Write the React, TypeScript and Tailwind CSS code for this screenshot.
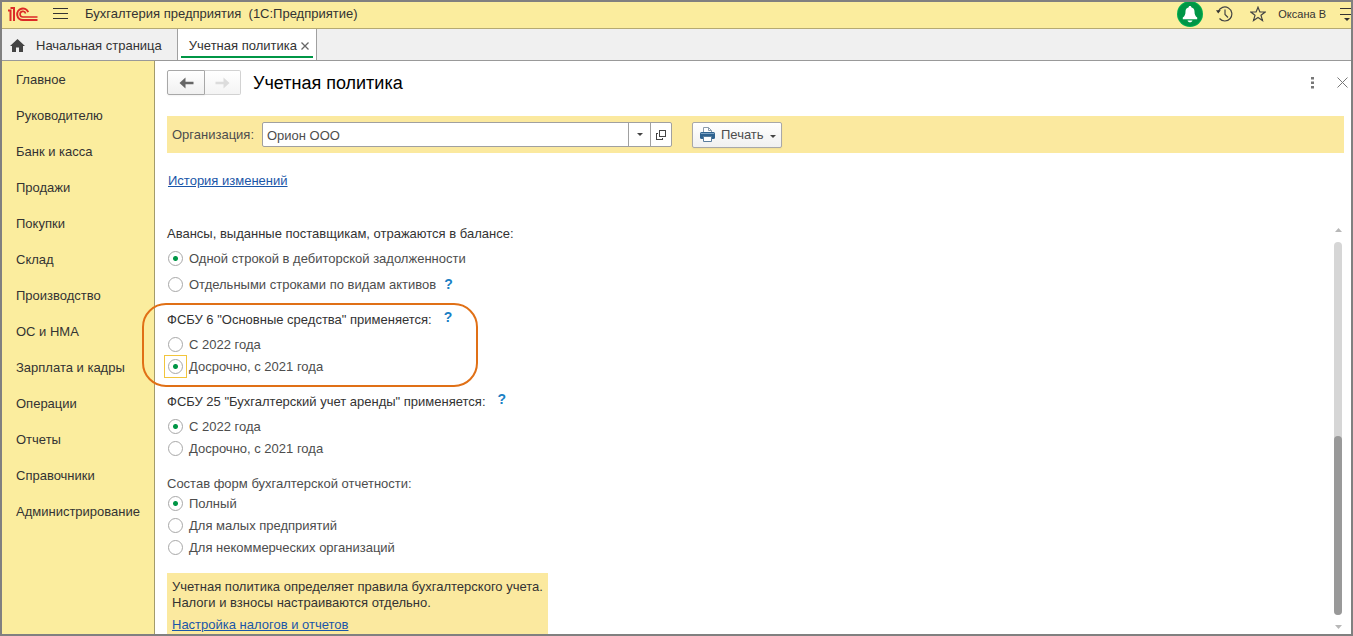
import { useState } from "react";
import type { ReactNode } from "react";

const SECTIONS = [
  "Главное",
  "Руководителю",
  "Банк и касса",
  "Продажи",
  "Покупки",
  "Склад",
  "Производство",
  "ОС и НМА",
  "Зарплата и кадры",
  "Операции",
  "Отчеты",
  "Справочники",
  "Администрирование",
];

function Logo() {
  return (
    <svg width="30" height="15" viewBox="0 0 30 15" fill="none" stroke="#dc2a27">
      <path d="M0 3.500h2.500V14" strokeWidth="2" />
      <path d="M2.500 1h3.500V14" strokeWidth="2" />
      <path d="M20.200 5.200A5.700 5.700 0 1 0 15 13H29.500" strokeWidth="2" />
      <path d="M17.600 6.500A2.800 2.800 0 1 0 15 10H29.500" strokeWidth="1.700" />
    </svg>
  );
}

function TopBar() {
  return (
    <header className="flex h-[27px] shrink-0 items-center border-b border-[#b5aa72] bg-[#fbed9e] pb-0.5 pl-1.5 text-[#333]">
      <Logo />
      <button aria-label="Меню" className="ml-[15px]">
        <svg width="15" height="12" viewBox="0 0 15 12" stroke="#333" shapeRendering="crispEdges">
          <path d="M0 .5h15M0 5.500h15M0 10.500h15" />
        </svg>
      </button>
      <h1 className="ml-[17px] whitespace-pre">Бухгалтерия предприятия  (1С:Предприятие)</h1>
      <div className="ml-auto flex items-center">
        <button aria-label="Уведомления">
          <svg width="26" height="26" viewBox="0 0 26 26">
            <circle cx="13" cy="13" r="13" fill="#00b050" />
            <circle cx="13" cy="13" r="12" fill="#009646" />
            <path
              d="M13 5c-.9 0-1.300.6-1.300 1.200-2.200.6-3.200 2.200-3.200 4.400 0 3-.8 4.600-2.700 6v1.700h14.400v-1.700c-1.900-1.400-2.700-3-2.700-6 0-2.200-1-3.800-3.200-4.400C14.300 5.600 13.900 5 13 5zM10.500 19.400h5c-.3 1.200-1.300 1.800-2.500 1.800s-2.200-.6-2.500-1.800z"
              fill="#fff"
            />
          </svg>
        </button>
        <button aria-label="История" className="ml-[13px]">
          <svg width="17" height="16" viewBox="0 0 17 16" fill="none" stroke="#444" strokeWidth="1.200">
            <path d="M2.300 5.500A7 7 0 1 1 3.500 12.500" />
            <path d="M9 3.500v5l3 3" />
            <path d="M0 4.200h4.800L2.200 7.400z" fill="#333" stroke="none" />
          </svg>
        </button>
        <button aria-label="Избранное" className="ml-[17px]">
          <svg width="16" height="16" viewBox="0 0 16 16" fill="none" stroke="#444" strokeWidth="1.200">
            <path d="M8 1.200 9.900 6h5.300l-4.200 3.300 1.500 5.200L8 11.500l-4.500 3L5 9.300.8 6h5.300z" />
          </svg>
        </button>
        <span className="ml-3 text-[11px]">Оксана В</span>
        <button aria-label="Настройки" className="ml-3.5">
          <svg width="11" height="13" viewBox="0 0 11 13">
            <path d="M0 .5h11M0 6.500h11" stroke="#333" shapeRendering="crispEdges" />
            <path d="M4 10h6l-3 3z" fill="#333" />
          </svg>
        </button>
      </div>
    </header>
  );
}

function Tabs() {
  return (
    <nav className="flex h-8 shrink-0 border-b border-[#999] bg-[#f0f0f0] text-[#333]">
      <button className="flex items-center border-r border-[#a0a0a0] pt-0.5 pr-[15px] pl-2">
        <svg width="15" height="13" viewBox="0 0 15 13" fill="#444">
          <path d="M7.500 0 15 7h-2v6H9V8.500H6V13H2V7H0z" />
        </svg>
        <span className="ml-[11px]">Начальная страница</span>
      </button>
      <div className="flex border-r border-[#a0a0a0] bg-white px-[3px] pb-0.5">
        <div className="flex items-center border-b-2 border-[#009646] pt-1.5 pr-1 pl-2">
          <button>Учетная политика</button>
          <button aria-label="Закрыть вкладку" className="ml-1">
            <svg width="8" height="8" viewBox="0 0 8 8" stroke="#666" strokeWidth="1.300">
              <path d="m.5.5 7 7m0-7-7 7" />
            </svg>
          </button>
        </div>
      </div>
    </nav>
  );
}

function Sidebar() {
  return (
    <nav className="w-[153px] shrink-0 border-r border-[#a39b6b] bg-[#fbed9e] pl-3.5 text-[#333]">
      {SECTIONS.map((s) => (
        <a key={s} href="#" className="flex h-9 items-center pt-0.5">
          {s}
        </a>
      ))}
    </nav>
  );
}

function Arrow({ flip, color }: { flip?: boolean; color: string }) {
  return (
    <svg width="15" height="12" viewBox="0 0 15 12" fill={color} className={flip ? "rotate-180" : ""}>
      <path d="M6.500.5V4.800H14.500v2.400H6.500v4.300L.5 6z" />
    </svg>
  );
}

function PageHeader() {
  return (
    <div className="flex h-[43px] items-center">
      <button
        aria-label="Назад"
        className="flex h-[25px] w-[38px] items-center justify-center rounded-l-xs border border-[#a8a8a8] bg-linear-to-b from-white to-[#f0f0f0] shadow-xs"
      >
        <Arrow color="#666" />
      </button>
      <button
        aria-label="Вперед"
        className="flex h-[25px] w-9 items-center justify-center rounded-r-xs border border-l-0 border-[#d2d2d2] bg-linear-to-b from-white to-[#f4f4f4]"
      >
        <Arrow flip color="#dcdcdc" />
      </button>
      <h2 className="ml-3 text-lg text-black">Учетная политика</h2>
      <button aria-label="Еще" className="ml-auto">
        <svg width="3" height="12" viewBox="0 0 3 12" fill="#777">
          <path d="M0 0h3v2.500H0zM0 4.500h3V7H0zM0 9h3v2.500H0z" />
        </svg>
      </button>
      <button aria-label="Закрыть" className="mr-[3px] ml-[23px]">
        <svg width="11" height="11" viewBox="0 0 11 11" stroke="#777">
          <path d="m.5.5 10 10m0-10-10 10" />
        </svg>
      </button>
    </div>
  );
}

function CompanyBar() {
  return (
    <div className="mt-3 mr-[7px] flex h-[37px] items-center bg-[#fbe99f] pl-[5px]">
      <label htmlFor="org" className="w-[90px] text-[#4d4d4d]">
        Организация:
      </label>
      <div className="flex h-[25px] w-[410px] rounded-xs border border-[#a0a0a0] bg-white">
        <input id="org" defaultValue="Орион ООО" className="min-w-0 flex-1 px-1 pt-0.5 text-[#4d4d4d] outline-none" />
        <button aria-label="Выбрать" className="flex w-[22px] items-center justify-center border-l border-[#a0a0a0]">
          <svg width="6" height="3" viewBox="0 0 6 3" fill="#444">
            <path d="M0 0h6L3 3z" />
          </svg>
        </button>
        <button aria-label="Открыть" className="flex w-[21px] items-center justify-center border-l border-[#a0a0a0]">
          <svg width="10" height="10" viewBox="0 0 10 10" fill="none" stroke="#444" shapeRendering="crispEdges">
            <path d="M3.500.5h6v6h-6zM2 3.500H.5v6h6V8" />
          </svg>
        </button>
      </div>
      <button className="ml-5 flex h-[26px] w-[90px] items-center rounded-xs border border-[#a8a8a8] bg-linear-to-b from-white to-[#f0f0f0] pl-[7px] text-[#4d4d4d] shadow-xs">
        <svg width="15" height="15" viewBox="0 0 15 15">
          <path d="M3.500 5.500v-5h5l3 3v2" fill="#fff" stroke="#8a9aab" />
          <path d="M8.500.5v3h3" fill="none" stroke="#8a9aab" />
          <rect y="5" width="15" height="7" rx="1.500" fill="#2f628f" />
          <path d="M1 6.500h13" stroke="#7ea3c4" />
          <path d="M3.500 9.500h8v5h-8z" fill="#fff" stroke="#5a7d9d" />
        </svg>
        <span className="ml-1.5">Печать</span>
        <svg width="6" height="3" viewBox="0 0 6 3" fill="#444" className="mt-1 ml-1.5">
          <path d="M0 0h6L3 3z" />
        </svg>
      </button>
    </div>
  );
}

function Help() {
  return (
    <button aria-label="Справка" className="ml-2 text-sm font-bold text-[#1a7fc4]">
      ?
    </button>
  );
}

type OptionProps = {
  name: string;
  label: string;
  value: string;
  onChange: (v: string) => void;
  framed?: boolean;
  help?: boolean;
};

function Option({ name, label, value, onChange, framed, help }: OptionProps) {
  return (
    <div className="-ml-[3px] flex h-[22px] items-center">
      <label className="flex items-center gap-0.5">
        <span
          className={`flex size-[23px] items-center justify-center border ${framed ? "border-[#f2c53d]" : "border-transparent"}`}
        >
          <input
            type="radio"
            name={name}
            checked={value === label}
            onChange={() => onChange(label)}
            className="size-[15px] appearance-none rounded-full border border-[#a8a8a8] bg-white outline-none checked:bg-[radial-gradient(circle,#009646_2px,transparent_3px)]"
          />
        </span>
        <span className="pt-0.5">{label}</span>
      </label>
      {help && <Help />}
    </div>
  );
}

type GroupProps = {
  title: string;
  help?: boolean;
  muted?: boolean;
  children: ReactNode;
};

function Group({ title, help, muted, children }: GroupProps) {
  return (
    <section className="relative">
      <div className={`flex h-[18px] items-center ${muted ? "text-[#4d4d4d]" : "text-[#333]"}`}>
        <span className="pt-0.5">{title}</span>
        {help && (
          <span className="-mt-1 pl-1">
            <Help />
          </span>
        )}
      </div>
      {children}
    </section>
  );
}

function ScrollBar() {
  return (
    <div className="mr-[9px] flex w-2 flex-col items-center pt-1 pb-[5px]">
      <svg width="7" height="4" viewBox="0 0 7 4" fill="#b8b8b8">
        <path d="M3.500 0 7 4H0z" />
      </svg>
      <div className="mt-2.5 mb-2.5 flex w-2 flex-1 flex-col justify-end rounded-full bg-[#d6d6d6]">
        <div className="h-[48%] rounded-full bg-[#999]" />
      </div>
      <svg width="7" height="4" viewBox="0 0 7 4" fill="#b8b8b8">
        <path d="M0 0h7L3.500 4z" />
      </svg>
    </div>
  );
}

export default function App() {
  const [advances, setAdvances] = useState("Одной строкой в дебиторской задолженности");
  const [fsbu6, setFsbu6] = useState("Досрочно, с 2021 года");
  const [fsbu25, setFsbu25] = useState("С 2022 года");
  const [forms, setForms] = useState("Полный");

  return (
    <div className="flex h-screen flex-col overflow-hidden border-2 border-[#808080] bg-white font-['Liberation_Sans',Arial,sans-serif] text-[13px] leading-4 text-[#4d4d4d]">
      <TopBar />
      <Tabs />
      <div className="flex min-h-0 flex-1">
        <Sidebar />
        <main className="flex min-w-0 flex-1 flex-col pl-3">
          <PageHeader />
          <CompanyBar />
          <div className="mt-5 pl-px">
            <a href="#" className="text-[#1a56a8] underline">
              История изменений
            </a>
          </div>
          <div className="mt-[35px] flex min-h-0 flex-1 justify-between">
            <div className="flex flex-col items-start gap-[15px]">
              <Group title="Авансы, выданные поставщикам, отражаются в балансе:">
                <div className="mt-[5px] flex flex-col gap-1">
                  <Option
                    name="advances"
                    label="Одной строкой в дебиторской задолженности"
                    value={advances}
                    onChange={setAdvances}
                  />
                  <Option
                    name="advances"
                    label="Отдельными строками по видам активов"
                    value={advances}
                    onChange={setAdvances}
                    help
                  />
                </div>
              </Group>

              <Group title={'ФСБУ 6 "Основные средства" применяется:'} help>
                <div className="mt-[5px]">
                  <Option name="fsbu6" label="С 2022 года" value={fsbu6} onChange={setFsbu6} />
                  <Option name="fsbu6" label="Досрочно, с 2021 года" value={fsbu6} onChange={setFsbu6} framed />
                </div>
                {/* highlight around the group */}
                <div className="pointer-events-none absolute -top-[7px] -left-[25px] h-[84px] w-[336px] rounded-3xl border-2 border-[#e07016]" />
              </Group>

              <Group title={'ФСБУ 25 "Бухгалтерский учет аренды" применяется:'} help>
                <div className="mt-[5px]">
                  <Option name="fsbu25" label="С 2022 года" value={fsbu25} onChange={setFsbu25} />
                  <Option name="fsbu25" label="Досрочно, с 2021 года" value={fsbu25} onChange={setFsbu25} />
                </div>
              </Group>

              <Group title="Состав форм бухгалтерской отчетности:" muted>
                <Option name="forms" label="Полный" value={forms} onChange={setForms} />
                <Option name="forms" label="Для малых предприятий" value={forms} onChange={setForms} />
                <Option name="forms" label="Для некоммерческих организаций" value={forms} onChange={setForms} />
              </Group>

              <div className="w-[381px] bg-[#fbe99f] px-[5px] pt-1.5 pb-1 text-[#333]">
                <p>Учетная политика определяет правила бухгалтерского учета.</p>
                <p>Налоги и взносы настраиваются отдельно.</p>
                <a href="#" className="mt-1.5 block text-[#1a56a8] underline">
                  Настройка налогов и отчетов
                </a>
              </div>
            </div>
            <ScrollBar />
          </div>
        </main>
      </div>
    </div>
  );
}
